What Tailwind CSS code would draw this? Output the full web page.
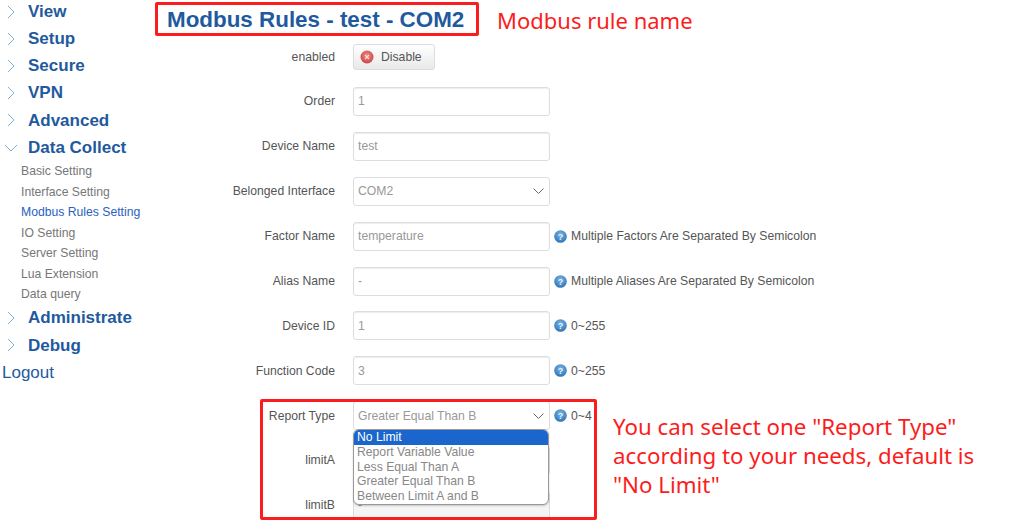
<!DOCTYPE html>
<html lang="en">
<head>
  <meta charset="UTF-8" />
  <title>Modbus Rules</title>
  <script src="https://cdn.jsdelivr.net/npm/@tailwindcss/browser@4"></script>
</head>
<body class="bg-white font-['Liberation_Sans',Arial,sans-serif]">
  <div class="relative flex h-[523px] w-[1024px] overflow-hidden">

    <!-- sidebar -->
    <nav class="-mt-[2px] w-[167px] shrink-0 text-[#1f5a9e]">
      <div class="flex h-[27.2px] items-center text-[17px] font-bold">
        <svg class="ml-[7px] mr-[13px] h-[14px] w-[8px]" viewBox="0 0 8 14" fill="none" stroke="#7fb2d4" stroke-width="1"><path d="M1 1l6 6-6 6"/></svg>View
      </div>
      <div class="flex h-[27.2px] items-center text-[17px] font-bold">
        <svg class="ml-[7px] mr-[13px] h-[14px] w-[8px]" viewBox="0 0 8 14" fill="none" stroke="#7fb2d4" stroke-width="1"><path d="M1 1l6 6-6 6"/></svg>Setup
      </div>
      <div class="flex h-[27.2px] items-center text-[17px] font-bold">
        <svg class="ml-[7px] mr-[13px] h-[14px] w-[8px]" viewBox="0 0 8 14" fill="none" stroke="#7fb2d4" stroke-width="1"><path d="M1 1l6 6-6 6"/></svg>Secure
      </div>
      <div class="flex h-[27.2px] items-center text-[17px] font-bold">
        <svg class="ml-[7px] mr-[13px] h-[14px] w-[8px]" viewBox="0 0 8 14" fill="none" stroke="#7fb2d4" stroke-width="1"><path d="M1 1l6 6-6 6"/></svg>VPN
      </div>
      <div class="flex h-[27.2px] items-center text-[17px] font-bold">
        <svg class="ml-[7px] mr-[13px] h-[14px] w-[8px]" viewBox="0 0 8 14" fill="none" stroke="#7fb2d4" stroke-width="1"><path d="M1 1l6 6-6 6"/></svg>Advanced
      </div>
      <div class="flex h-[27.2px] items-center text-[17px] font-bold">
        <svg class="ml-[4px] mr-[10px] h-[8px] w-[14px]" viewBox="0 0 14 8" fill="none" stroke="#7fb2d4" stroke-width="1"><path d="M1 1l6 6 6-6"/></svg>Data Collect
      </div>
      <ul class="pl-[21px] text-[12.2px] text-[#777]">
        <li class="flex h-[20.5px] items-center">Basic Setting</li>
        <li class="flex h-[20.5px] items-center">Interface Setting</li>
        <li class="flex h-[20.5px] items-center text-[#2a62c0]">Modbus Rules Setting</li>
        <li class="flex h-[20.5px] items-center">IO Setting</li>
        <li class="flex h-[20.5px] items-center">Server Setting</li>
        <li class="flex h-[20.5px] items-center">Lua Extension</li>
        <li class="flex h-[20.5px] items-center">Data query</li>
      </ul>
      <div class="flex h-[27.2px] items-center text-[17px] font-bold">
        <svg class="ml-[7px] mr-[13px] h-[14px] w-[8px]" viewBox="0 0 8 14" fill="none" stroke="#7fb2d4" stroke-width="1"><path d="M1 1l6 6-6 6"/></svg>Administrate
      </div>
      <div class="flex h-[27.2px] items-center text-[17px] font-bold">
        <svg class="ml-[7px] mr-[13px] h-[14px] w-[8px]" viewBox="0 0 8 14" fill="none" stroke="#7fb2d4" stroke-width="1"><path d="M1 1l6 6-6 6"/></svg>Debug
      </div>
      <div class="flex h-[27.2px] items-center pl-[2px] text-[17px]">Logout</div>
    </nav>

    <!-- main -->
    <main class="flex-1 text-[12.2px] text-[#555]">
      <h1 class="flex h-[34px] items-center pt-[6px] text-[22.4px] leading-none font-bold text-[#1f5a9e]">Modbus Rules - test - COM2</h1>

      <div class="flex h-[45px] items-center pt-[1px]">
        <label class="w-[168px] text-right">enabled</label>
        <button class="ml-[18px] flex h-[26px] w-[82px] items-center rounded-[3px] border border-[#ddd] bg-gradient-to-b from-white to-[#e9e9e9] pl-[6px] text-[#555]">
          <svg class="mr-[7px] h-[14px] w-[14px]" viewBox="0 0 14 14">
            <defs><radialGradient id="red-ball" cx="50%" cy="40%" r="60%"><stop offset="0" stop-color="#ee8f8c"/><stop offset="1" stop-color="#c9433f"/></radialGradient></defs>
            <circle cx="7" cy="7" r="6.5" fill="url(#red-ball)"/><path d="M5 5l4 4M9 5l-4 4" stroke="#f7dcdc" stroke-width="1.1"/>
          </svg>Disable
        </button>
      </div>

      <div class="flex h-[44.9px] items-center">
        <label class="w-[168px] text-right">Order</label>
        <div class="ml-[18px] flex h-[29px] w-[197px] items-center rounded-[3px] border border-[#ddd] px-[4px] text-[#999] shadow-[inset_0_1px_1px_rgba(0,0,0,0.07)]">1</div>
      </div>

      <div class="flex h-[44.9px] items-center">
        <label class="w-[168px] text-right">Device Name</label>
        <div class="ml-[18px] flex h-[29px] w-[197px] items-center rounded-[3px] border border-[#ddd] px-[4px] text-[#999] shadow-[inset_0_1px_1px_rgba(0,0,0,0.07)]">test</div>
      </div>

      <div class="flex h-[44.9px] items-center">
        <label class="w-[168px] text-right">Belonged Interface</label>
        <div class="ml-[18px] flex h-[29px] w-[197px] items-center justify-between rounded-[3px] border border-[#ddd] px-[4px] text-[#999]">
          COM2
          <svg class="mr-[1px] h-[6px] w-[11px]" viewBox="0 0 11 6" fill="none" stroke="#666" stroke-width="1"><path d="M.5.5l5 5 5-5"/></svg>
        </div>
      </div>

      <div class="flex h-[44.9px] items-center">
        <label class="w-[168px] text-right">Factor Name</label>
        <div class="ml-[18px] flex h-[29px] w-[197px] items-center rounded-[3px] border border-[#ddd] px-[4px] text-[#999] shadow-[inset_0_1px_1px_rgba(0,0,0,0.07)]">temperature</div>
        <svg class="ml-[4px] mr-[4px] h-[13px] w-[13px]" viewBox="0 0 13 13">
          <defs><radialGradient id="blue-ball" cx="50%" cy="35%" r="65%"><stop offset="0" stop-color="#7db6e2"/><stop offset="1" stop-color="#2d74b5"/></radialGradient></defs>
          <circle cx="6.5" cy="6.5" r="6.3" fill="url(#blue-ball)"/><text x="6.5" y="10" text-anchor="middle" font-size="9" font-weight="700" fill="#e6f1fa">?</text>
        </svg>
        <span>Multiple Factors Are Separated By Semicolon</span>
      </div>

      <div class="flex h-[44.9px] items-center">
        <label class="w-[168px] text-right">Alias Name</label>
        <div class="ml-[18px] flex h-[29px] w-[197px] items-center rounded-[3px] border border-[#ddd] px-[4px] text-[#999] shadow-[inset_0_1px_1px_rgba(0,0,0,0.07)]">-</div>
        <svg class="ml-[4px] mr-[4px] h-[13px] w-[13px]" viewBox="0 0 13 13"><circle cx="6.5" cy="6.5" r="6.3" fill="url(#blue-ball)"/><text x="6.5" y="10" text-anchor="middle" font-size="9" font-weight="700" fill="#e6f1fa">?</text></svg>
        <span>Multiple Aliases Are Separated By Semicolon</span>
      </div>

      <div class="flex h-[44.9px] items-center">
        <label class="w-[168px] text-right">Device ID</label>
        <div class="ml-[18px] flex h-[29px] w-[197px] items-center rounded-[3px] border border-[#ddd] px-[4px] text-[#999] shadow-[inset_0_1px_1px_rgba(0,0,0,0.07)]">1</div>
        <svg class="ml-[4px] mr-[4px] h-[13px] w-[13px]" viewBox="0 0 13 13"><circle cx="6.5" cy="6.5" r="6.3" fill="url(#blue-ball)"/><text x="6.5" y="10" text-anchor="middle" font-size="9" font-weight="700" fill="#e6f1fa">?</text></svg>
        <span>0~255</span>
      </div>

      <div class="flex h-[44.9px] items-center">
        <label class="w-[168px] text-right">Function Code</label>
        <div class="ml-[18px] flex h-[29px] w-[197px] items-center rounded-[3px] border border-[#ddd] px-[4px] text-[#999] shadow-[inset_0_1px_1px_rgba(0,0,0,0.07)]">3</div>
        <svg class="ml-[4px] mr-[4px] h-[13px] w-[13px]" viewBox="0 0 13 13"><circle cx="6.5" cy="6.5" r="6.3" fill="url(#blue-ball)"/><text x="6.5" y="10" text-anchor="middle" font-size="9" font-weight="700" fill="#e6f1fa">?</text></svg>
        <span>0~255</span>
      </div>

      <div class="flex h-[44.9px] items-center">
        <label class="w-[168px] text-right">Report Type</label>
        <div class="ml-[18px] flex h-[29px] w-[197px] items-center justify-between rounded-[3px] border border-[#ddd] px-[4px] text-[#999]">
          Greater Equal Than B
          <svg class="mr-[1px] h-[6px] w-[11px]" viewBox="0 0 11 6" fill="none" stroke="#666" stroke-width="1"><path d="M.5.5l5 5 5-5"/></svg>
        </div>
        <svg class="ml-[4px] mr-[4px] h-[13px] w-[13px]" viewBox="0 0 13 13"><circle cx="6.5" cy="6.5" r="6.3" fill="url(#blue-ball)"/><text x="6.5" y="10" text-anchor="middle" font-size="9" font-weight="700" fill="#e6f1fa">?</text></svg>
        <span>0~4</span>
      </div>

      <div class="flex h-[44.9px] items-center">
        <label class="w-[168px] text-right">limitA</label>
        <div class="ml-[18px] h-[29px] w-[197px] rounded-[3px] border border-[#ddd]"></div>
      </div>

      <div class="flex h-[44.9px] items-center">
        <label class="w-[168px] text-right">limitB</label>
        <div class="ml-[18px] flex h-[29px] w-[197px] items-center rounded-[3px] border border-[#ddd] bg-[#f5f5f5] px-[4px] text-[#999]">-</div>
      </div>
    </main>

    <!-- open select list -->
    <div class="absolute left-[353px] top-[429px] w-[196px] overflow-hidden rounded-[6px] border border-[#999] bg-white text-[12.2px] leading-[14.8px] text-[#888] shadow-[0_1px_2px_rgba(0,0,0,0.2)]">
      <div class="bg-[#1a66cc] pl-[3px] text-white">No Limit</div>
      <div class="pl-[3px]">Report Variable Value</div>
      <div class="pl-[3px]">Less Equal Than A</div>
      <div class="pl-[3px]">Greater Equal Than B</div>
      <div class="pl-[3px]">Between Limit A and B</div>
    </div>

    <!-- red annotations -->
    <div class="absolute left-[155px] top-[2px] h-[34px] w-[324px] rounded-[2px] border-[3px] border-[#fb1d1d]"></div>
    <div class="absolute left-[260px] top-[399px] h-[121px] w-[337px] rounded-[2px] border-[3px] border-[#fb1d1d]"></div>
    <div class="absolute left-[497px] top-[4px] font-['Noto_Sans',sans-serif] text-[22px] leading-[32px] text-[#fb1d1d]">Modbus rule name</div>
    <div class="absolute left-[613px] top-[412px] w-[405px] font-['Noto_Sans',sans-serif] text-[22.3px] leading-[29px] text-[#fb1d1d]">You can select one "Report Type"<br />according to your needs, default is<br />"No Limit"</div>
  </div>
</body>
</html>
